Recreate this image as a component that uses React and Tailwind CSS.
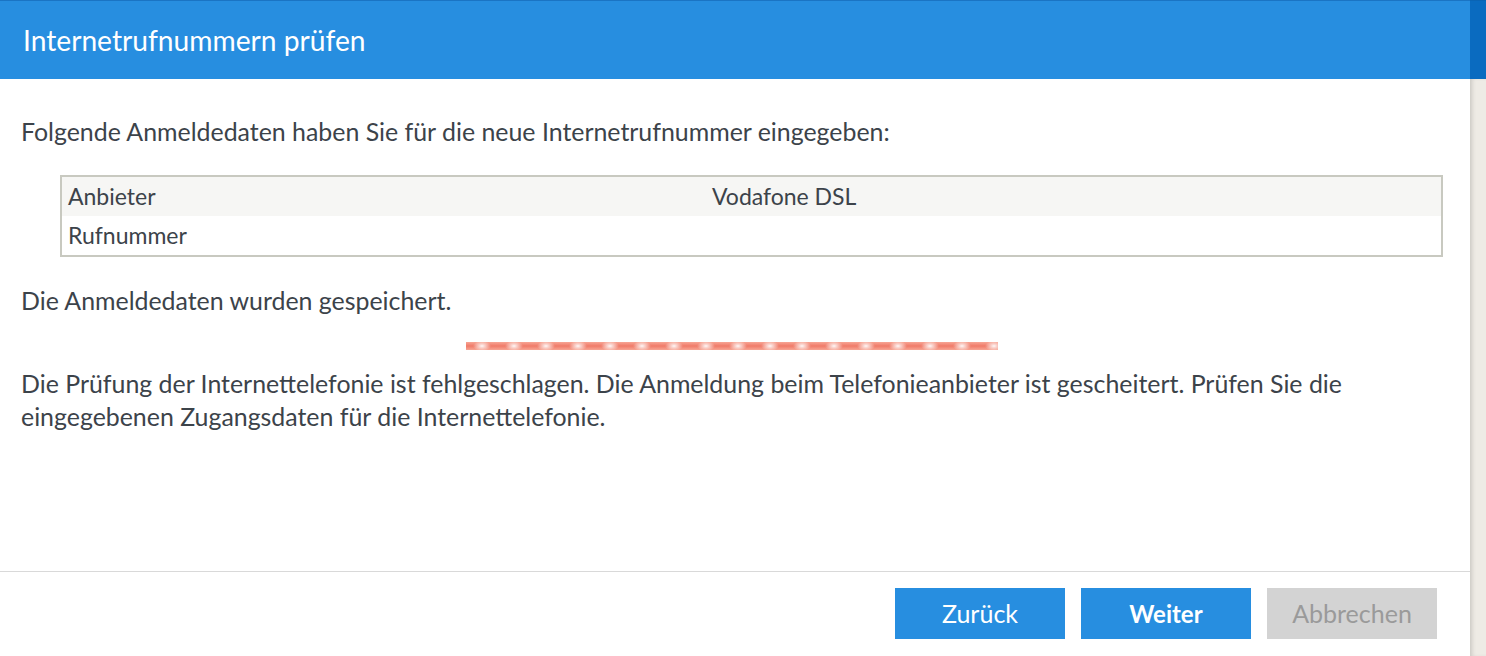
import React from "react";

const rows = [
  { label: "Anbieter", value: "Vodafone DSL" },
  { label: "Rufnummer", value: "" },
];

const App = () => {
  return (
    <div className="flex h-[656px] w-[1486px] overflow-hidden bg-white font-['Lato','Liberation_Sans',sans-serif] text-[#3c434a]">
      <div className="flex w-[1470px] flex-col">
        <div className="flex h-[79px] items-center border-t border-[#1a74c4] bg-[#278ee0] pl-[23px]">
          <h1 className="text-[28.2px] text-white">Internetrufnummern prüfen</h1>
        </div>

        <div className="flex flex-1 flex-col px-[21px]">
          <p className="mt-[38px] text-[24.9px] leading-[28px]">
            Folgende Anmeldedaten haben Sie für die neue Internetrufnummer eingegeben:
          </p>

          <div className="ml-[39px] mr-[6px] mt-[30px] border-2 border-[#c8c9c0]">
            {rows.map((row, i) => (
              <div
                key={row.label}
                className={`flex h-[39px] items-center text-[23px] ${i === 0 ? "bg-[#f6f6f4]" : "bg-white"}`}
              >
                <span className="w-[650px] pl-[6px]">{row.label}</span>
                <span>{row.value}</span>
              </div>
            ))}
          </div>

          <p className="mt-[29px] text-[24.9px] leading-[28px]">Die Anmeldedaten wurden gespeichert.</p>

          <div className="mt-[28px] flex justify-center pr-[2px]">
            <div className="ml-[-4px] h-[8px] w-[532px] bg-[radial-gradient(ellipse_9px_5px_at_center,rgba(255,255,255,0.95),rgba(255,255,255,0)),linear-gradient(to_bottom,#f7a594,#f07b69_50%,#f7a594)] [background-size:32px_100%] bg-repeat-x" />
          </div>

          <p className="mt-[17px] text-[24.9px] leading-[33px]">
            Die Prüfung der Internettelefonie ist fehlgeschlagen. Die Anmeldung beim Telefonieanbieter ist gescheitert. Prüfen Sie die eingegebenen Zugangsdaten für die Internettelefonie.
          </p>
        </div>

        <div className="flex h-[85px] items-start justify-end gap-[16px] border-t border-[#d9d9d9] pr-[33px] pt-[16px]">
          <button className="h-[51px] w-[170px] bg-[#278ee0] text-[25px] text-white">Zurück</button>
          <button className="h-[51px] w-[170px] bg-[#278ee0] text-[24px] font-bold text-white">Weiter</button>
          <button className="h-[51px] w-[170px] bg-[#d3d3d3] text-[25px] text-[#9a9a9a]">Abbrechen</button>
        </div>
      </div>

      <div className="flex w-[16px] flex-col">
        <div className="h-[79px] border-t border-[#0a64b4] bg-[#0a6bc0]" />
        <div className="flex-1 bg-[#eeebe5] shadow-[inset_4px_0_4px_-2px_rgba(0,0,0,0.15)]" />
      </div>
    </div>
  );
};

export default App;
